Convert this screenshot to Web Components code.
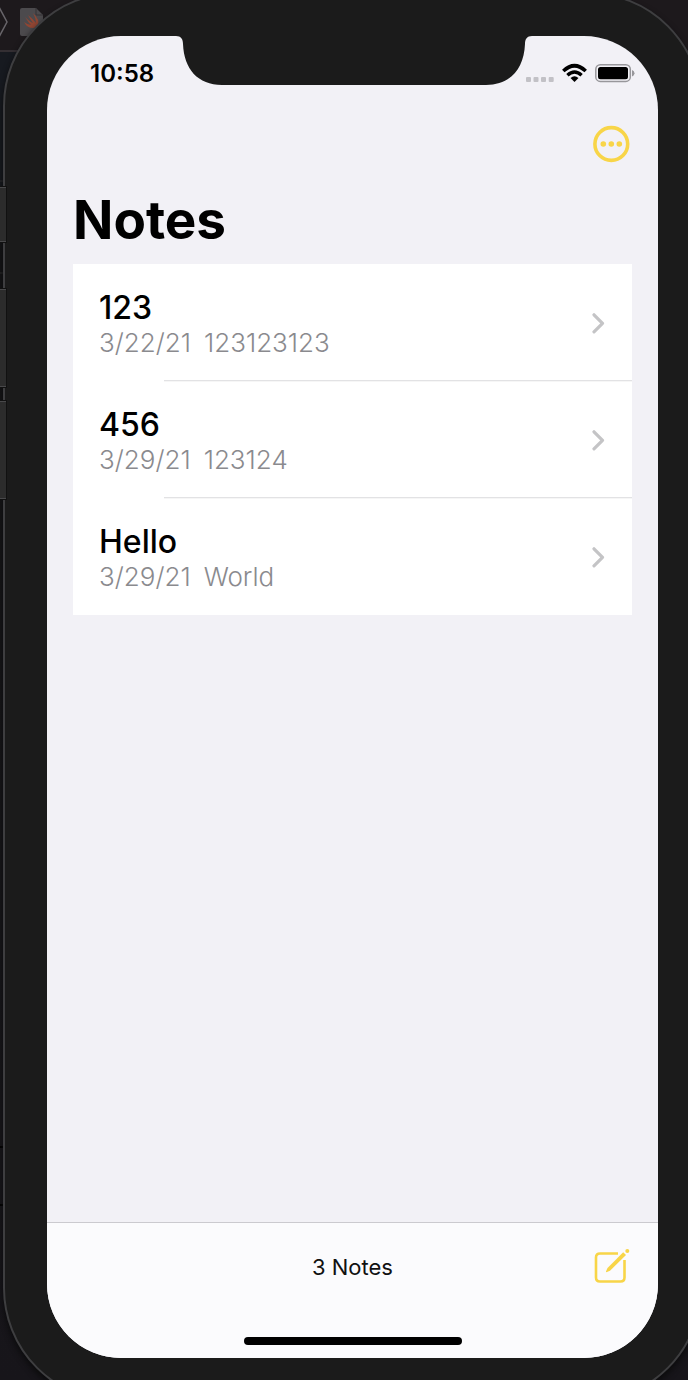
<!DOCTYPE html>
<html lang="en">
<head>
<meta charset="utf-8">
<meta name="viewport" content="width=device-width, initial-scale=1">
<title>Notes</title>
<style>
  body { margin: 0; background: #17161a; font-family: Inter, "Liberation Sans", sans-serif; color: #000; }
</style>
</head>
<body>
<desktop-stage>
  <phone-frame>
    <status-bar time="10:58"></status-bar>
    <notes-header heading="Notes"></notes-header>
    <notes-list>
      <note-row date="3/22/21" heading="123">123123123</note-row>
      <note-row date="3/29/21" heading="456">123124</note-row>
      <note-row date="3/29/21" heading="Hello">World</note-row>
    </notes-list>
    <bottom-toolbar slot="footer">3 Notes</bottom-toolbar>
  </phone-frame>
</desktop-stage>
<script>
  function define(name, render) {
    customElements.define(name, class extends HTMLElement {
      constructor() {
        super();
        this.attachShadow({ mode: "open" });
      }
      connectedCallback() {
        const t = document.createElement("template");
        t.innerHTML = render(this);
        this.shadowRoot.replaceChildren(t.content.cloneNode(true));
      }
    });
  }

  /* The dark editor window that lies behind the phone. */
  define("desktop-stage", () => `
    <style>
      :host { display: block; position: relative; overflow: hidden; min-height: 100vh; background: linear-gradient(#1d191c 0 50px, #342f33 50px 52px, #171a20 52px 170px, #141416 260px, #18171b 1140px, #17151a); }
      .backdrop { position: absolute; left: 0; top: 0; }
    </style>
    <svg class="backdrop" width="60" height="1260" aria-hidden="true">
      <path d="M-1 7L7 22L-1 37" fill="none" stroke="#68656a" stroke-width="1.5"/>
      <path d="M22 8H36L43 15V36H22Q20 36 20 34V10Q20 8 22 8Z" fill="#4c4a4d"/>
      <path d="M36 8V15H43" fill="none" stroke="#353336"/>
      <path d="M24 22Q28 25 31 25Q28 22 25 17Q30 22 33 23Q30 19 28 15Q33 19 36 23Q36 18 33 13Q40 20 38 25Q40 28 38 29Q36 27 33 28Q27 28 24 22Z" fill="#914633"/>
      <path d="M0 181H5M0 273H5" stroke="#333"/>
      <path d="M0 1147H5M0 1205H5" stroke="#000" stroke-width="2"/>
    </svg>
    <slot></slot>`);

  define("phone-frame", () => `
    <style>
      :host { display: flex; position: relative; box-sizing: border-box; margin: -8px -14px -22px 3px; min-height: calc(100vh + 30px); padding: 42px; border: 2px solid #3e3e40; border-radius: 114px; background: #1b1b1b; box-shadow: 0 4px 6px #0b0b0c; }
      .screen { flex: 1; min-width: 0; display: flex; flex-direction: column; position: relative; overflow: hidden; border-radius: 74px; background: #f2f1f6; }
      main { flex: 1; }
      .notch { position: absolute; top: 0; left: 50%; margin-left: -181px; }
      .key { position: absolute; left: -6px; width: 7px; background: #2c2c2c; border: solid #48484a; border-width: 1px 0; box-shadow: 0 0 0 1px #111; }
      .mute { top: 193px; height: 53px; }
      .up { top: 295px; height: 96px; }
      .down { top: 407px; height: 96px; }
    </style>
    <i class="key mute"></i><i class="key up"></i><i class="key down"></i>
    <div class="screen">
      <main><slot></slot></main>
      <slot name="footer"></slot>
      <svg class="notch" width="364" height="49" viewBox="0 0 364 49" aria-hidden="true"><path d="M4 0C9 0 11 3 11 8C12 33 26 49 50 49H314C338 49 352 33 353 8C353 3 355 0 360 0Z" fill="#1b1b1b"/></svg>
    </div>`);

  define("status-bar", host => `
    <style>
      :host { display: flex; align-items: center; justify-content: space-between; box-sizing: border-box; height: 76px; padding: 0 23px 0 43px; }
      time { font-size: 24px; line-height: 28px; font-weight: 600; }
    </style>
    <time>${host.getAttribute("time")}</time>
    <svg width="110" height="22" viewBox="0 0 110 22" aria-hidden="true">
      <g fill="#c2c1c6"><rect x="1" y="14" width="5" height="5" rx="1"/><rect x="8.5" y="14" width="5" height="5" rx="1"/><rect x="16" y="14" width="5" height="5" rx="1"/><rect x="23.7" y="14" width="5" height="5" rx="1"/></g>
      <g fill="none" stroke="#000"><path d="M38.3 8Q49.5 -2.5 60.7 8" stroke-width="3.6"/><path d="M42.4 12.3Q49.5 5.8 56.6 12.3" stroke-width="3.4"/></g>
      <path d="M49.5 19L45.5 15Q49.5 11.6 53.5 15Z"/>
      <rect x="70.8" y="1.8" width="34.5" height="16.6" rx="4.5" fill="none" stroke="#98979b" stroke-width="1.5"/>
      <rect x="73" y="4" width="30" height="12.2" rx="2.5"/>
      <path d="M107 7Q109.500 8 109.500 10.200T107 13.500Z" fill="#98979b"/>
    </svg>`);

  define("notes-header", host => `
    <style>
      :host { display: block; padding: 12px 26px 0; }
      .actions { display: flex; justify-content: flex-end; }
      button { display: block; padding: 0; border: 0; background: none; }
      svg { display: block; }
      h1 { margin: 26px 0 14px; font-size: 53px; line-height: 60px; font-weight: 700; }
    </style>
    <div class="actions">
      <button type="button" aria-label="More">
        <svg width="40" height="40" viewBox="0 0 40 40"><circle cx="19.300" cy="20" r="16.400" fill="none" stroke="#f8d548" stroke-width="3.600"/><g fill="#f8d548"><circle cx="11.300" cy="20" r="2.800"/><circle cx="19.300" cy="20" r="2.800"/><circle cx="27.300" cy="20" r="2.800"/></g></svg>
      </button>
    </div>
    <h1>${host.getAttribute("heading")}</h1>`);

  define("notes-list", () => `
    <style>
      :host { display: block; margin: 0 26px; background: #fff; }
    </style>
    <div role="list"><slot></slot></div>`);

  define("note-row", host => `
    <style>
      :host { display: block; position: relative; }
      :host(:not(:last-child))::after { content: ""; position: absolute; left: 91px; right: 0; bottom: 0; height: 1px; background: #e2e2e4; box-shadow: 0 1px #f6f6f6; }
      a { display: flex; align-items: center; justify-content: space-between; padding: 26px 26px 21px; color: inherit; text-decoration: none; }
      h2 { margin: 0; font-size: 32px; line-height: 36px; font-weight: 500; }
      p { display: flex; gap: 13px; margin: 0; font-size: 26px; line-height: 34px; font-weight: 300; color: #8a8a8e; }
      svg { display: block; flex: none; }
    </style>
    <a href="#">
      <div><h2>${host.getAttribute("heading")}</h2><p><time>${host.getAttribute("date")}</time><span><slot></slot></span></p></div>
      <svg width="15" height="24" viewBox="0 0 15 24" aria-hidden="true"><path d="M3 1.800L11.500 10.300L3 18.800" fill="none" stroke="#c4c4c6" stroke-width="3.200" stroke-linecap="round" stroke-linejoin="round"/></svg>
    </a>`);
  document.querySelectorAll("note-row").forEach(r => r.setAttribute("role", "listitem"));

  define("bottom-toolbar", () => `
    <style>
      :host { display: flex; flex-direction: column; align-items: center; justify-content: space-between; box-sizing: border-box; min-height: 136px; padding: 22px 26px 13px; border-top: 1px solid #cbcacf; background: #fbfbfd; }
      .bar { width: 100%; display: grid; grid-template-columns: 1fr auto 1fr; align-items: center; }
      .count { grid-column: 2; font-size: 22px; line-height: 28px; font-weight: 400; color: #111; }
      button { justify-self: end; padding: 0; border: 0; background: none; }
      svg { display: block; }
      .home { width: 218px; height: 8px; border-radius: 4px; background: #000; }
    </style>
    <div class="bar">
      <span class="count"><slot></slot></span>
      <button type="button" aria-label="New note">
        <svg width="40" height="44" viewBox="0 0 40 44"><g fill="none" stroke="#f8d548" stroke-width="2.600"><path d="M26 8.500H8Q4 8.500 4 12.500V32.500Q4 36.500 8 36.500H28.500Q32.500 36.500 32.500 32.500V15"/></g><path d="M31.200 7.200L34 10L18 25.700L14.300 27.200Q13.900 27.200 14 26.500L15.500 23Z" fill="#f8d548"/><circle cx="35.300" cy="6" r="2" fill="#f8d548"/></svg>
      </button>
    </div>
    <div class="home"></div>`);
</script>
</body>
</html>
